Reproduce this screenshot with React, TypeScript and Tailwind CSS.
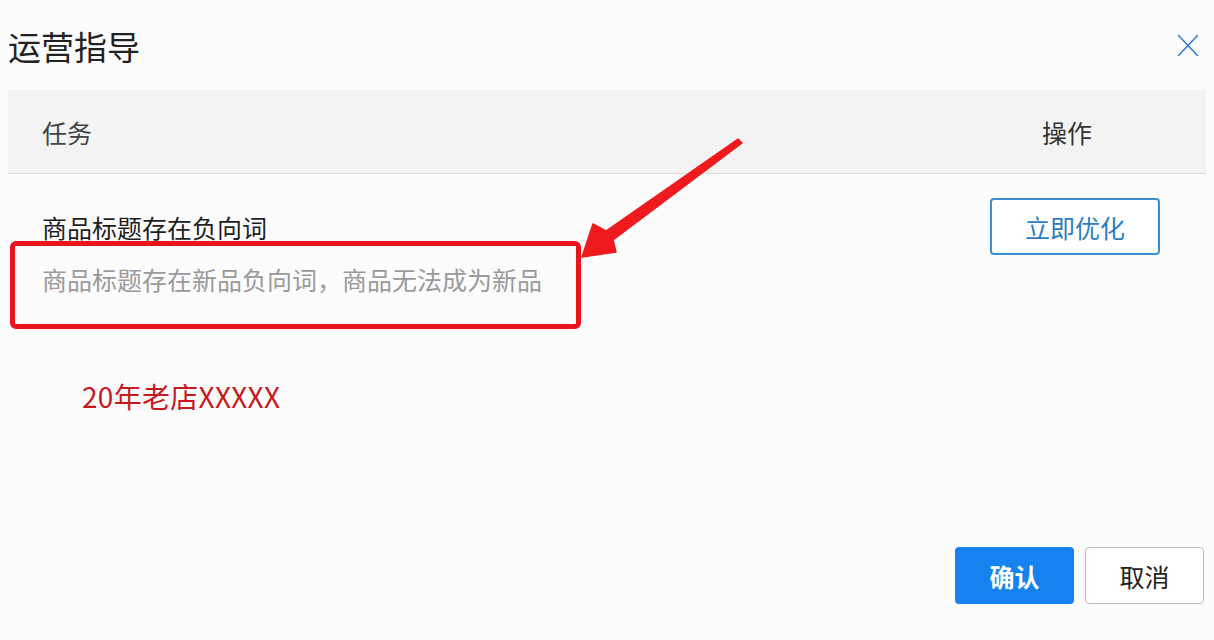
import React from "react";

const font = "font-['Noto_Sans_CJK_SC','Noto_Sans',sans-serif]";

function CloseIcon() {
  return (
    <svg width="22" height="24" viewBox="0 0 22 24" fill="none">
      <path d="M1.5 1.5L20.5 21.5M20.5 1.5L1.5 21.5" stroke="#2f7fcf" strokeWidth="1.6" strokeLinecap="round" />
    </svg>
  );
}

function Annotation() {
  return (
    <>
      {/* red highlight box drawn over the description */}
      <div className="pointer-events-none absolute left-[10px] top-[241px] h-[88px] w-[571px] rounded-[6px] border-[5px] border-[#e8161c]" />
      <svg className="pointer-events-none absolute left-0 top-0" width="1214" height="640" viewBox="0 0 1214 640">
        <polygon
          points="582,257 593,224 606,231 738,139 742,143 613,240 616,252"
          fill="#ee1a1e"
          stroke="#ee1a1e"
          strokeWidth="1.5"
          strokeLinejoin="round"
        />
      </svg>
    </>
  );
}

export default function App() {
  return (
    <div className={`relative flex h-[640px] w-[1214px] flex-col overflow-hidden bg-[#fcfcfd] ${font}`}>
      <div className="flex items-center justify-between pl-[8px] pr-[15px] pt-[26px]">
        <h1 className="text-[33px] leading-[40px] font-normal text-[#222]">运营指导</h1>
        <CloseIcon />
      </div>

      <div className="mx-[8px] mt-[24px] flex h-[84px] items-center justify-between border-b border-[#dcdcdc] bg-[#f3f3f4] pl-[34px] pr-[114px]">
        <span className="text-[25px] leading-[32px] text-[#444]">任务</span>
        <span className="text-[25px] leading-[32px] text-[#333]">操作</span>
      </div>

      <div className="flex justify-between pl-[42px] pr-[54px] pt-[24px]">
        <div className="mt-[13px] flex flex-col gap-[20px]">
          <p className="text-[25px] leading-[32px] text-[#1f1f1f]">商品标题存在负向词</p>
          <p className="text-[25px] leading-[32px] text-[#9a9a9a]">商品标题存在新品负向词，商品无法成为新品</p>
        </div>
        <button className="h-[57px] w-[170px] rounded-[4px] border-2 border-[#3a8fd2] bg-white text-[25px] leading-[32px] text-[#2c7cc3]">
          立即优化
        </button>
      </div>

      <p className="ml-[82px] mt-[83px] text-[28px] leading-[36px] tracking-[0.3px] text-[#c8181e]">20年老店XXXXX</p>

      <div className="mt-auto flex justify-end gap-[11px] pb-[36px] pr-[10px]">
        <button className="h-[57px] w-[119px] rounded-[4px] bg-[#1682f0] text-[25px] leading-[32px] font-bold text-white">
          确认
        </button>
        <button className="h-[57px] w-[119px] rounded-[4px] border border-[#bcbcbc] bg-white text-[25px] leading-[32px] text-[#222]">
          取消
        </button>
      </div>

      <Annotation />
    </div>
  );
}
